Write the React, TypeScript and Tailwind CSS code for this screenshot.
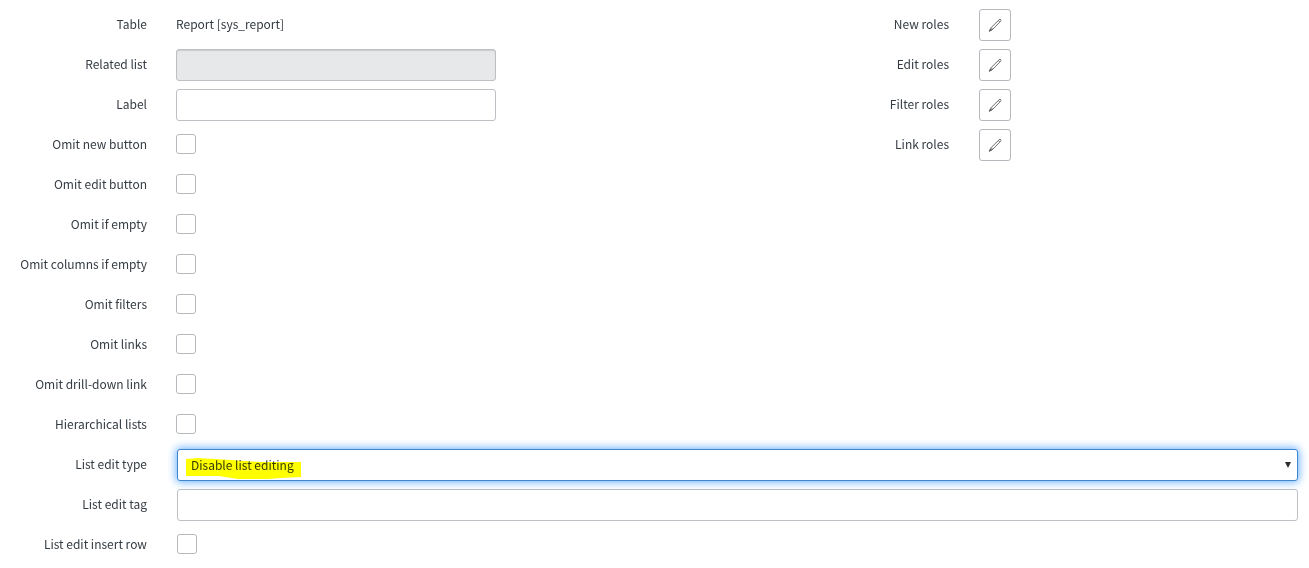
import { useState } from 'react';
import type { ReactNode } from 'react';

interface FieldRowProps {
  id: string;
  label: string;
  wide?: boolean;
  children: ReactNode;
}

const omitFields = [
  { id: 'omit_new_button', label: 'Omit new button' },
  { id: 'omit_edit_button', label: 'Omit edit button' },
  { id: 'omit_if_empty', label: 'Omit if empty' },
  { id: 'omit_columns_if_empty', label: 'Omit columns if empty' },
  { id: 'omit_filters', label: 'Omit filters' },
  { id: 'omit_links', label: 'Omit links' },
  { id: 'omit_drilldown_link', label: 'Omit drill-down link' },
  { id: 'hierarchical_lists', label: 'Hierarchical lists' },
];

const roleFields = [
  { id: 'new_roles', label: 'New roles' },
  { id: 'edit_roles', label: 'Edit roles' },
  { id: 'filter_roles', label: 'Filter roles' },
  { id: 'link_roles', label: 'Link roles' },
];

const inputClass =
  'block h-8 rounded-[3px] border border-[#bdc0c4] bg-white px-3 outline-none disabled:bg-[#e6e8ea] disabled:shadow-[inset_0_1px_1px_rgba(0,0,0,0.12)]';

function FieldRow({ id, label, wide = false, children }: FieldRowProps) {
  return (
    <div className="flex h-10 items-start pt-1">
      <label
        htmlFor={id}
        className={`shrink-0 text-right leading-[30px] whitespace-nowrap ${wide ? 'w-[177px] pr-[30px]' : 'w-[176px] pr-[29px]'}`}
      >
        {label}
      </label>
      {children}
    </div>
  );
}

function Checkbox({ id }: { id: string }) {
  return (
    <input
      id={id}
      type="checkbox"
      className="mt-[5px] h-5 w-5 appearance-none rounded-[3px] border border-[#b5b8bc] bg-white checked:bg-[#278efc]"
    />
  );
}

function PencilIcon() {
  return (
    <svg viewBox="0 0 14 14" className="h-[14px] w-[14px]" fill="none" stroke="#5b5f64" strokeWidth="0.9" strokeLinejoin="round">
      <path d="M1.4 13.2 3.2 9.6 11.2 1.6Q12 1 12.7 1.6 13.3 2.3 12.7 3.1L4.8 11.2Z" />
      <path d="M10.3 2.6 11.8 4M3.2 9.6 4.8 11.2" />
      <path d="M1.4 13.2 2.5 11 3.6 12Z" fill="#5b5f64" />
    </svg>
  );
}

export default function App() {
  const [editType, setEditType] = useState('disable');

  return (
    <form className="bg-white pt-[5px] pr-[11px] font-['Noto_Sans_CJK_SC',sans-serif] text-[12px] text-[#343b42]">
      <div className="flex">
        <div className="flex-1">
          <FieldRow id="table" label="Table">
            <output id="table" className="leading-[30px]">Report [sys_report]</output>
          </FieldRow>
          <FieldRow id="related_list" label="Related list">
            <input id="related_list" type="text" disabled className={`${inputClass} w-80`} />
          </FieldRow>
          <FieldRow id="label" label="Label">
            <input id="label" type="text" className={`${inputClass} w-80`} />
          </FieldRow>
          {omitFields.map((field) => (
            <FieldRow key={field.id} id={field.id} label={field.label}>
              <Checkbox id={field.id} />
            </FieldRow>
          ))}
        </div>

        <div className="w-[496px]">
          {roleFields.map((field) => (
            <FieldRow key={field.id} id={field.id} label={field.label} wide>
              <button
                id={field.id}
                type="button"
                className="flex h-8 w-8 items-center justify-center rounded-[3px] border border-[#b5b8bc] bg-white"
              >
                <PencilIcon />
              </button>
            </FieldRow>
          ))}
        </div>
      </div>

      <FieldRow id="list_edit_type" label="List edit type" wide>
        <div className="relative flex-1">
          <select
            id="list_edit_type"
            value={editType}
            onChange={(e) => setEditType(e.target.value)}
            className="block h-8 w-full appearance-none rounded-[3px] border border-[#3f86d0] bg-white px-[13px] shadow-[0_0_8px_1px_#66afff] outline-none"
          >
            <option value="disable">Disable list editing</option>
            <option value="save_immediately">Save immediately</option>
            <option value="save_by_row">Save data by rows</option>
          </select>
          {/* Marker stroke over the selected value */}
          <svg
            viewBox="0 0 116 22"
            className="pointer-events-none absolute top-[9px] left-[9px] h-[22px] w-[116px] mix-blend-multiply"
            fill="#ffff00"
          >
            <path d="M0 1 12 0 45 2 74 4 115 4V19L95 20 82 21H52L33 18 0 18Z" />
          </svg>
          <svg
            viewBox="0 0 6 6"
            className="pointer-events-none absolute top-[13px] right-[7px] h-[6px] w-[6px]"
            fill="#2b2f33"
          >
            <path d="M0 0H6L3 6Z" />
          </svg>
        </div>
      </FieldRow>
      <FieldRow id="list_edit_tag" label="List edit tag" wide>
        <input id="list_edit_tag" type="text" className={`${inputClass} flex-1`} />
      </FieldRow>
      <FieldRow id="list_edit_insert_row" label="List edit insert row" wide>
        <Checkbox id="list_edit_insert_row" />
      </FieldRow>
    </form>
  );
}
